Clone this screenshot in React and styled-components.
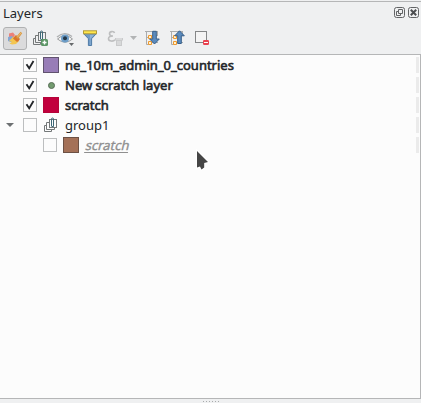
import React from 'react';
import styled, { createGlobalStyle } from 'styled-components';

const GlobalStyle = createGlobalStyle`
  * { box-sizing: border-box; }
  html, body { margin: 0; height: 100%; overflow: hidden; }
  body { font-family: "Noto Sans", sans-serif; font-size: 13px; color: #232629; }
  svg { display: block; flex: none; }
`;

const Panel = styled.div`
  width: 421px;
  height: 403px;
  display: flex;
  flex-direction: column;
  background: #eff0f1;
`;

const TitleBar = styled.header`
  height: 23px;
  margin-top: 1px;
  border-top: 1px solid #b5b6b7;
  padding: 0 2px 0 3px;
  display: flex;
  align-items: center;
`;

const Title = styled.span`
  flex: 1;
  line-height: 20px;
`;

const TitleActions = styled.div`
  display: flex;
  gap: 3px;
  padding-bottom: 1px;
`;

const Toolbar = styled.div`
  height: 30px;
  padding: 3px 3px 0;
  display: flex;
  align-items: flex-start;
  gap: 1px;
`;

const ToolButton = styled.button`
  width: ${p => p.$width || 24}px;
  height: 23px;
  padding: 2px 0 3px;
  flex: none;
  display: flex;
  align-items: center;
  justify-content: center;
  border: 1px solid ${p => (p.$active ? '#b0b1b2' : 'transparent')};
  border-radius: 3px;
  background: ${p => (p.$active ? '#dbdbdc' : 'transparent')};
`;

const Tree = styled.main`
  height: 345px;
  border: solid #b5b6b7;
  border-width: 1px 1px 1px 0;
  background: #fcfcfc;
`;

const Row = styled.div`
  height: 20px;
  padding-left: ${p => (p.$nested ? 43 : 6)}px;
  display: flex;
  align-items: center;
`;

const Expander = styled.div`
  width: 17px;
  display: flex;
`;

const Checkbox = styled.div`
  width: 14px;
  height: 14px;
  border: 1px solid #bcbebf;
  background: #fcfcfc;
  margin-right: 6px;
`;

const Symbol = styled.div`
  width: 16px;
  height: 16px;
  margin-right: 6px;
  display: flex;
  align-items: center;
  justify-content: center;
`;

const Swatch = styled.div`
  width: 16px;
  height: 16px;
  background: ${p => p.$fill};
  border: 1px solid ${p => p.$edge};
`;

const Dot = styled.div`
  width: 7px;
  height: 7px;
  border-radius: 50%;
  background: #729b6f;
  border: 1px solid #586d56;
`;

const Label = styled.span`
  line-height: 20px;
  white-space: pre;
  margin-right: auto;
  margin-left: ${p => (p.$off ? 1 : 0)}px;
  -webkit-text-stroke: ${p => (p.$bold ? 0.6 : p.$off ? 0.35 : 0)}px currentColor;
  color: ${p => (p.$off ? '#8f8f8f' : '#232629')};
  transform: ${p => (p.$off ? 'skewX(-14deg)' : 'none')};
  text-decoration: ${p => (p.$off ? 'underline' : 'none')};
  text-decoration-thickness: 1px;
  text-underline-offset: 2px;
`;

const Indicator = styled.div`
  width: 3px;
  height: 16px;
  margin-right: 1px;
  background: #ebebeb;
`;

const Splitter = styled.footer`
  flex: 1;
  display: flex;
  justify-content: center;
  align-items: center;
  gap: 2px;
`;

const Grip = styled.i`
  width: 1px;
  height: 1px;
  background: #a9abac;
`;

const Pointer = styled.svg`
  position: absolute;
  left: 194px;
  top: 148px;
`;

const FloatIcon = () => (
  <svg width="11" height="11" viewBox="0 0 11 11" fill="none" stroke="#626466">
    <rect x=".5" y=".5" width="10" height="10" rx="2" />
    <path d="M4.5 2.5h4v4h-4z M4.5 4.5h-2v4h4v-2" />
  </svg>
);

const CloseIcon = () => (
  <svg width="11" height="11" viewBox="0 0 11 11" fill="none" stroke="#626466">
    <rect x=".5" y=".5" width="10" height="10" rx="2" />
    <path d="M2.8 2.8l5.4 5.4m0-5.4l-5.4 5.4" stroke="#4b4d4f" strokeWidth="2" />
  </svg>
);

const BrushIcon = () => (
  <svg width="16" height="16" viewBox="0 0 16 16">
    <path d="M2 3.5l4-1L8 5 6 8 2 7z" fill="#ec8078" />
    <path d="M1 7l4-1 3 4-3 2.5L1 11z" fill="#86a7d3" />
    <path d="M2 11l4-4h2l4 4-3 3-4 .5-2.5-1L5 12z" fill="#f4c650" />
    <path d="M7.5 6.5L9 5l4 4-1.5 2-1.5 1-4-3.5z" fill="#d9752d" />
    <path d="M9 7l4.6-5.3 1.6 1.5L11 9z" fill="#d99a43" />
    <path d="M10.5 7L14 3" stroke="#f0c37f" strokeWidth=".8" />
  </svg>
);

const GroupIcon = ({ add }) => (
  <svg width="16" height="16" viewBox="0 0 16 16" fill="none" stroke="#747879">
    <rect x="6.5" y="2.5" width="7" height="8" />
    <path d="M6 5.5H3.5v7h8V11" />
    <path d="M3 8.5H1.5v6h7v-2" />
    <path d="M8.5 9V2a1 1 0 0 1 2 0v7.5h-2" stroke="#3d6877" />
    {add && (
      <g>
        <rect x="9" y="9" width="7" height="7" rx="1.5" fill="#5b9565" stroke="none" />
        <path d="M12.5 10.5v4m-2-2h4" stroke="#fff" strokeWidth="1.4" />
      </g>
    )}
  </svg>
);

const EyeIcon = () => (
  <svg width="18" height="16" viewBox="0 0 18 16">
    <path d="M1.5 9Q9 2 16.5 9Q9 15.5 1.5 9Z" fill="#f7f7f6" stroke="#999b9c" />
    <path d="M1 7Q8.5 .5 16 6.5" fill="none" stroke="#adafb0" strokeWidth="1.4" />
    <circle cx="9" cy="8.5" r="4" fill="#6c9dc8" />
    <circle cx="9" cy="8.3" r="2" fill="#253847" />
    <path d="M13 13h5l-2.5 3z" fill="#66696b" />
  </svg>
);

const FilterIcon = () => (
  <svg width="16" height="16" viewBox="0 0 16 16">
    <path d="M1.5 3.5h13L9.6 8.7V15.5H6.4V8.7z" fill="#709bc7" stroke="#507ca7" />
    <path d="M8 5h4L8.5 8.7V15H8z" fill="#8eb3d6" />
    <rect x="1.5" y=".8" width="13" height="3" fill="#ffe74b" stroke="#b29b37" />
  </svg>
);

const ExpressionIcon = () => (
  <svg width="16" height="16" viewBox="0 0 16 16" fill="none">
    <path d="M7.5 3C7 1 2.5 1 2.5 3.7c0 2 2 2.3 3.5 2.3C3 6 1.5 7 1.5 8.7c0 3 5 3 6.5 1" stroke="#bdbebf" strokeWidth="1.6" />
    <path d="M8 8h8v2l-1 1v5H9v-5l-1-1z" fill="#c9cacb" />
    <path d="M9 9h6m-4 2v4m2-4v4" stroke="#e6e7e8" />
  </svg>
);

const DropIcon = () => (
  <svg width="7" height="4" viewBox="0 0 7 4"><path d="M0 0h7L3.5 4z" fill="#b2b4b5" /></svg>
);

const TreeArrowIcon = ({ up }) => (
  <svg width="16" height="16" viewBox="0 0 16 16" fill="none">
    <path d="M1 1.5h13M2.5 2v12.5H5M2.5 7.5H5M8 5.5h6M8 12.5h6M13.5 2v3" stroke="#aaacad" />
    <path d="M4.5 5.5h3v3h-3zM4.5 11.5h3v3h-3z" fill="#fff2cf" stroke="#f09a2f" />
    <path
      d={up ? 'M10.5 .8l4.8 5h-3v7.7H8.7V5.8h-3z' : 'M10.5 14l4.8-5h-3V1.3H8.7V9h-3z'}
      fill="#5c8bbd"
      stroke="#365f8a"
    />
  </svg>
);

const RemoveIcon = () => (
  <svg width="16" height="16" viewBox="0 0 16 16">
    <rect x="1.5" y="1.5" width="11" height="11" fill="#f4f4f4" stroke="#858788" />
    <rect x="9" y="10" width="6" height="5" rx="1.2" fill="#e94350" />
    <path d="M10 12.5h4" stroke="#fff" />
  </svg>
);

const CheckMark = () => (
  <svg width="12" height="12" viewBox="0 0 12 12">
    <path d="M2.5 5.3L5.2 9.3 9.5 2" fill="none" stroke="#232629" strokeWidth="1.8" />
  </svg>
);

const ExpandedIcon = () => (
  <svg width="8" height="4" viewBox="0 0 8 4"><path d="M0 0h8L4 4z" fill="#6d7072" /></svg>
);

const LayerRow = ({ name, checked, symbol, bold, off, nested, expanded }) => (
  <Row $nested={nested}>
    {!nested && <Expander>{expanded && <ExpandedIcon />}</Expander>}
    <Checkbox>{checked && <CheckMark />}</Checkbox>
    <Symbol>{symbol}</Symbol>
    <Label $bold={bold} $off={off}>{name}</Label>
    <Indicator />
  </Row>
);

export default function App() {
  return (
    <Panel>
      <GlobalStyle />
      <TitleBar>
        <Title>Layers</Title>
        <TitleActions>
          <FloatIcon />
          <CloseIcon />
        </TitleActions>
      </TitleBar>
      <Toolbar>
        <ToolButton $active><BrushIcon /></ToolButton>
        <ToolButton><GroupIcon add /></ToolButton>
        <ToolButton><EyeIcon /></ToolButton>
        <ToolButton><FilterIcon /></ToolButton>
        <ToolButton><ExpressionIcon /></ToolButton>
        <ToolButton $width={11}><DropIcon /></ToolButton>
        <ToolButton><TreeArrowIcon /></ToolButton>
        <ToolButton><TreeArrowIcon up /></ToolButton>
        <ToolButton><RemoveIcon /></ToolButton>
      </Toolbar>
      <Tree>
        <LayerRow name="ne_10m_admin_0_countries" checked bold symbol={<Swatch $fill="#987db7" $edge="#61536f" />} />
        <LayerRow name="New scratch layer" checked bold symbol={<Dot />} />
        <LayerRow name="scratch" checked bold symbol={<Swatch $fill="#c1003d" $edge="#b40439" />} />
        <LayerRow name="group1" expanded symbol={<GroupIcon />} />
        <LayerRow name="scratch" nested off symbol={<Swatch $fill="#a47158" $edge="#6c5145" />} />
      </Tree>
      <Splitter>
        {[0, 1, 2, 3, 4, 5].map(n => <Grip key={n} />)}
      </Splitter>
      <Pointer width="18" height="26" viewBox="0 0 18 26">
        <path
          d="M3 3l11 11-3.8 1v4.5L7.5 21.5 6 18.5 3 19.5z"
          fill="#454545"
          stroke="#fff"
          strokeWidth="2"
          paintOrder="stroke"
        />
      </Pointer>
    </Panel>
  );
}
